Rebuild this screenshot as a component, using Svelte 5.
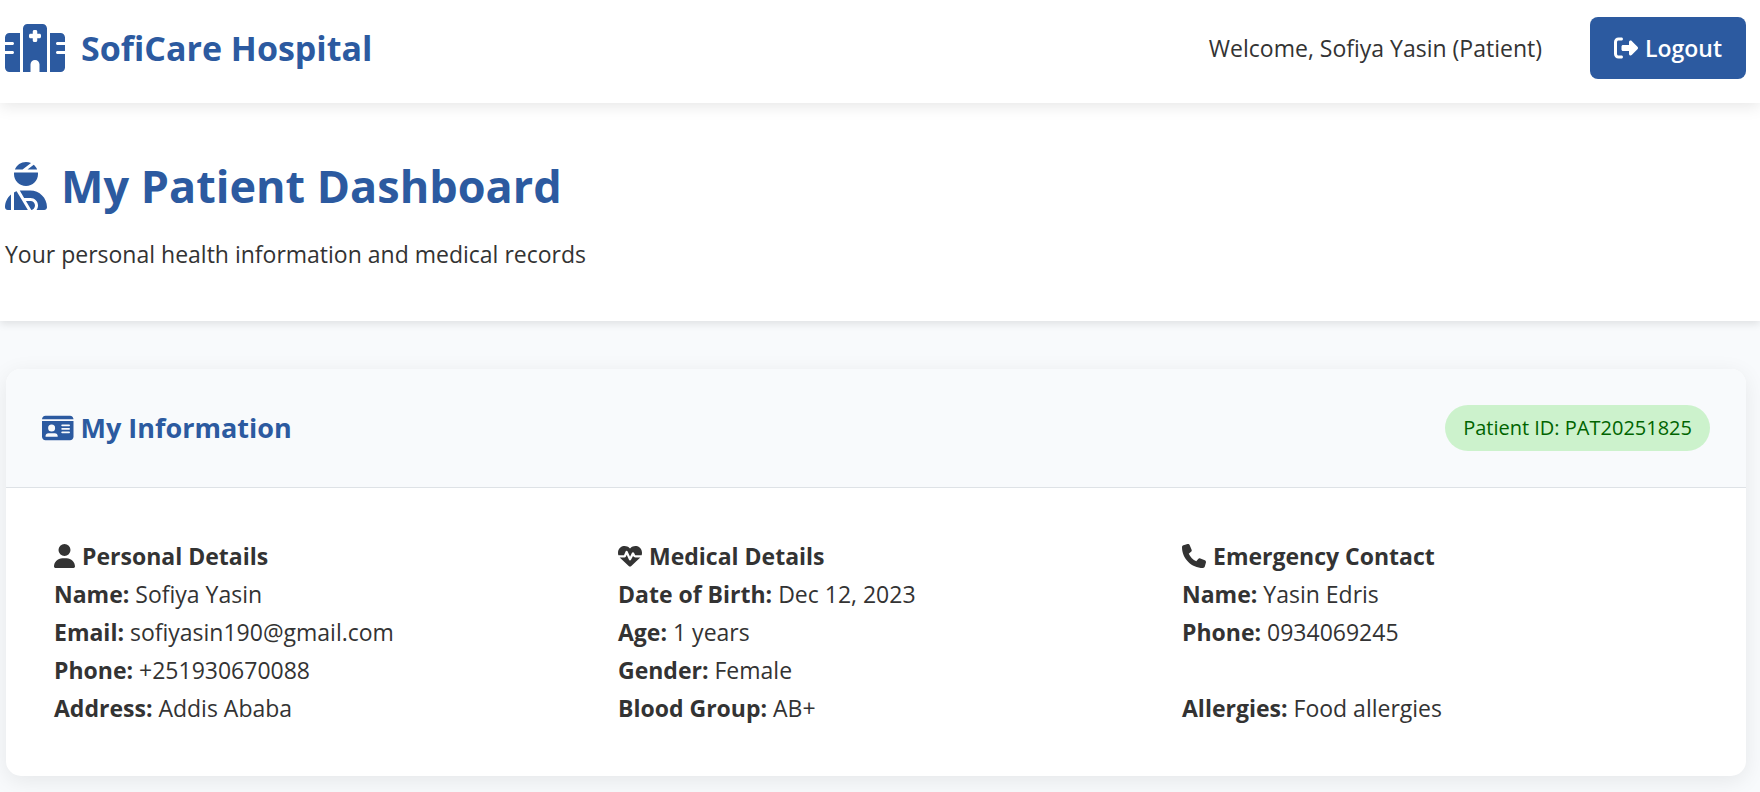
<script>
  const icons = {
    hospital: { w: 640, d: 'M192 48c0-26.5 21.5-48 48-48H400c26.5 0 48 21.5 48 48V512H368V432c0-26.5-21.5-48-48-48s-48 21.5-48 48v80H192V48zM48 96H160V512H48c-26.5 0-48-21.5-48-48V320H80c8.8 0 16-7.2 16-16s-7.2-16-16-16H0V224H80c8.8 0 16-7.2 16-16s-7.2-16-16-16H0V144c0-26.5 21.5-48 48-48zm544 0c26.5 0 48 21.5 48 48v48H560c-8.8 0-16 7.2-16 16s7.2 16 16 16h80v64H560c-8.8 0-16 7.2-16 16s7.2 16 16 16h80V464c0 26.5-21.5 48-48 48H480V96H592zM312 64c-8.8 0-16 7.2-16 16v24H272c-8.8 0-16 7.2-16 16v16c0 8.8 7.2 16 16 16h24v24c0 8.8 7.2 16 16 16h16c8.8 0 16-7.2 16-16V152h24c8.8 0 16-7.2 16-16V120c0-8.8-7.2-16-16-16H344V80c0-8.8-7.2-16-16-16H312z' },
    injured: { w: 448, d: 'M240 80H342.7c-7.9-19.5-20.4-36.5-36.2-49.9L240 80zm37.7-68.2C261.3 4.2 243.2 0 224 0c-53.7 0-99.8 33.1-118.7 80h81.4l91-68.2zM224 256c70.7 0 128-57.3 128-128c0-5.4-.3-10.8-1-16H97c-.7 5.2-1 10.6-1 16c0 70.7 57.3 128 128 128zM124 312.4c-9.7 3.1-19.1 7-28 11.7V512H243.7L181.5 408.2 124 312.4zm33-7.2L204.3 384H272c44.2 0 80 35.8 80 80c0 18-6 34.6-16 48h82.3c16.4 0 29.7-13.3 29.7-29.7C448 383.8 368.2 304 269.7 304H178.3c-7.2 0-14.3 .4-21.3 1.3zM0 482.3C0 498.7 13.3 512 29.7 512H64V345.4C24.9 378.1 0 427.3 0 482.3zM320 464c0-26.5-21.5-48-48-48H223.5l57.1 95.2C303 507.2 320 487.6 320 464z' },
    idCard: { w: 576, d: 'M0 96l576 0c0-35.3-28.7-64-64-64H64C28.7 32 0 60.7 0 96zm0 32V416c0 35.3 28.7 64 64 64H512c35.3 0 64-28.7 64-64V128H0zM64 405.3c0-29.5 23.9-53.3 53.3-53.3H234.7c29.5 0 53.3 23.9 53.3 53.3c0 5.9-4.8 10.7-10.7 10.7H74.7c-5.9 0-10.7-4.8-10.7-10.7zM176 192a64 64 0 1 1 0 128 64 64 0 1 1 0-128zm176 16c0-8.8 7.2-16 16-16H496c8.8 0 16 7.2 16 16s-7.2 16-16 16H368c-8.8 0-16-7.2-16-16zm0 64c0-8.8 7.2-16 16-16H496c8.8 0 16 7.2 16 16s-7.2 16-16 16H368c-8.8 0-16-7.2-16-16zm0 64c0-8.8 7.2-16 16-16H496c8.8 0 16 7.2 16 16s-7.2 16-16 16H368c-8.8 0-16-7.2-16-16z' },
    user: { w: 448, d: 'M224 256A128 128 0 1 0 224 0a128 128 0 1 0 0 256zm-45.7 48C79.8 304 0 383.8 0 482.3C0 498.7 13.3 512 29.7 512H418.3c16.4 0 29.7-13.3 29.7-29.7C448 383.8 368.2 304 269.7 304H178.3z' },
    heart: { w: 512, d: 'M228.3 469.1L47.6 300.4c-4.2-3.9-8.2-8.1-11.9-12.4h87c22.6 0 43-13.6 51.7-34.5l10.5-25.2 49.3 109.5c3.8 8.5 12.1 14 21.4 14.1s17.8-5 22-13.3L320 253.7l1.7 3.4c9.5 19 28.9 31 50.1 31H476.3c-3.7 4.3-7.7 8.5-11.9 12.4L283.7 469.1c-7.5 7-17.4 10.9-27.7 10.9s-20.2-3.9-27.7-10.9zM503.7 240h-132c-3 0-5.8-1.7-7.2-4.4l-23.2-46.3c-4.1-8.1-12.4-13.3-21.5-13.3s-17.4 5.1-21.5 13.3l-41.4 82.8L205.9 158.2c-3.9-8.7-12.7-14.3-22.2-14.1s-18.1 5.9-21.8 14.8l-31.8 76.3c-1.2 3-4.2 4.9-7.4 4.9H16c-2.6 0-5 .4-7.3 1.1C3 225.2 0 208.2 0 190.9v-5.8c0-69.9 50.5-129.5 119.4-141C165 36.5 211.4 51.4 244 84l12 12 12-12c32.6-32.6 79-47.5 124.6-39.9C461.5 55.6 512 115.2 512 185.1v5.8c0 16.9-2.8 33.5-8.3 49.1z' },
    phone: { w: 512, d: 'M164.9 24.6c-7.7-18.6-28-28.5-47.4-23.2l-88 24C12.1 30.2 0 46 0 64C0 311.4 200.6 512 448 512c18 0 33.8-12.1 38.6-29.5l24-88c5.3-19.4-4.6-39.7-23.2-47.4l-96-40c-16.3-6.8-35.2-2.1-46.3 11.6L304.7 368C234.3 334.7 177.3 277.7 144 207.3L193.3 167c13.7-11.2 18.4-30 11.6-46.3l-40-96z' },
    logout: { w: 512, d: 'M377.9 105.9L500.7 228.7c7.2 7.2 11.3 17.1 11.3 27.3s-4.1 20.1-11.3 27.3L377.9 406.1c-6.4 6.4-15 9.9-24 9.9c-18.7 0-33.9-15.2-33.9-33.9l0-62.1-128 0c-17.7 0-32-14.3-32-32l0-64c0-17.7 14.3-32 32-32l128 0 0-62.1c0-18.7 15.2-33.9 33.9-33.9c9 0 17.6 3.6 24 9.9zM160 96L96 96c-17.7 0-32 14.3-32 32l0 256c0 17.7 14.3 32 32 32l64 0c17.7 0 32 14.3 32 32s-14.3 32-32 32l-64 0c-53 0-96-43-96-96L0 128C0 75 43 32 96 32l64 0c17.7 0 32 14.3 32 32s-14.3 32-32 32z' }
  };

  const groups = [
    {
      icon: 'user', title: 'Personal Details',
      rows: [['Name', 'Sofiya Yasin'], ['Email', 'sofiyasin190@gmail.com'], ['Phone', '+251930670088'], ['Address', 'Addis Ababa']]
    },
    {
      icon: 'heart', title: 'Medical Details',
      rows: [['Date of Birth', 'Dec 12, 2023'], ['Age', '1 years'], ['Gender', 'Female'], ['Blood Group', 'AB+']]
    },
    {
      icon: 'phone', title: 'Emergency Contact',
      rows: [['Name', 'Yasin Edris'], ['Phone', '0934069245'], null, ['Allergies', 'Food allergies']]
    }
  ];
</script>

{#snippet icon(name)}
  <svg class="icon" viewBox="0 0 {icons[name].w} 512" aria-hidden="true"><path d={icons[name].d} /></svg>
{/snippet}

<header class="topbar">
  <div class="brand">
    {@render icon('hospital')}
    <span>SofiCare Hospital</span>
  </div>
  <div class="account">
    <span>Welcome, Sofiya Yasin (Patient)</span>
    <button type="button" class="logout">{@render icon('logout')}<span>Logout</span></button>
  </div>
</header>

<section class="hero">
  <h1>{@render icon('injured')}<span>My Patient Dashboard</span></h1>
  <p>Your personal health information and medical records</p>
</section>

<main>
  <section class="card">
    <div class="card-head">
      <h2>{@render icon('idCard')}<span>My Information</span></h2>
      <span class="pill">Patient ID: PAT20251825</span>
    </div>
    <div class="details">
      {#each groups as group}
        <div class="group">
          <h3>{@render icon(group.icon)}<span>{group.title}</span></h3>
          {#each group.rows as row}
            {#if row}
              <p><strong>{row[0]}:</strong> {row[1]}</p>
            {:else}
              <br />
            {/if}
          {/each}
        </div>
      {/each}
    </div>
  </section>
</main>

<style>
  :global(body) {
    margin: 0;
    background: #f8fafc;
    color: #333;
    font: 23px/38px "Segoe UI", "Open Sans", "Noto Sans", sans-serif;
  }
  h1, h2, h3, p { margin: 0; }
  .icon {
    display: block;
    flex: none;
    height: 24px;
    fill: currentColor;
  }
  .topbar {
    position: relative;
    z-index: 1;
    display: flex;
    justify-content: space-between;
    align-items: center;
    padding: 17px 14px 24px 5px;
    background: #fff;
    box-shadow: 0 3px 15px rgba(0, 0, 0, 0.1);
  }
  .brand {
    display: flex;
    align-items: center;
    gap: 16px;
    color: #2c5aa0;
    font-size: 34px;
    font-weight: 700;
  }
  .brand .icon { height: 48px; }
  .account {
    display: flex;
    align-items: center;
    gap: 48px;
  }
  .logout {
    display: flex;
    align-items: center;
    gap: 7px;
    padding: 12px 24px;
    border: 0;
    border-radius: 8px;
    background: #2c5aa0;
    color: #fff;
    font: inherit;
    font-weight: 600;
    cursor: pointer;
  }
  .hero {
    padding: 48px 5px;
    background: #fff;
    box-shadow: 0 3px 8px rgba(0, 0, 0, 0.1);
  }
  h1 {
    display: flex;
    align-items: center;
    gap: 14px;
    margin-bottom: 14px;
    color: #2c5aa0;
    font-size: 45px;
    line-height: 70px;
  }
  h1 .icon { height: 48px; }
  main { padding: 48px 14px 16px 6px; }
  .card {
    border-radius: 15px;
    background: #fff;
    box-shadow: 0 5px 22px rgba(0, 0, 0, 0.08);
    overflow: hidden;
  }
  .card-head {
    display: flex;
    justify-content: space-between;
    align-items: center;
    padding: 36px;
    border-bottom: 1px solid #dee2e6;
    background: #f8fafc;
  }
  h2 {
    display: flex;
    align-items: center;
    gap: 7px;
    color: #2c5aa0;
    font-size: 27px;
  }
  h2 .icon { height: 28px; }
  .pill {
    padding: 4px 18px;
    border-radius: 30px;
    background: #ccf2cc;
    color: #006400;
    font-size: 20px;
    font-weight: 500;
  }
  .details {
    display: grid;
    grid-template-columns: repeat(3, 1fr);
    gap: 48px;
    padding: 49px 48px;
  }
  h3 {
    display: flex;
    align-items: center;
    gap: 7px;
    font-size: 23px;
  }
</style>
